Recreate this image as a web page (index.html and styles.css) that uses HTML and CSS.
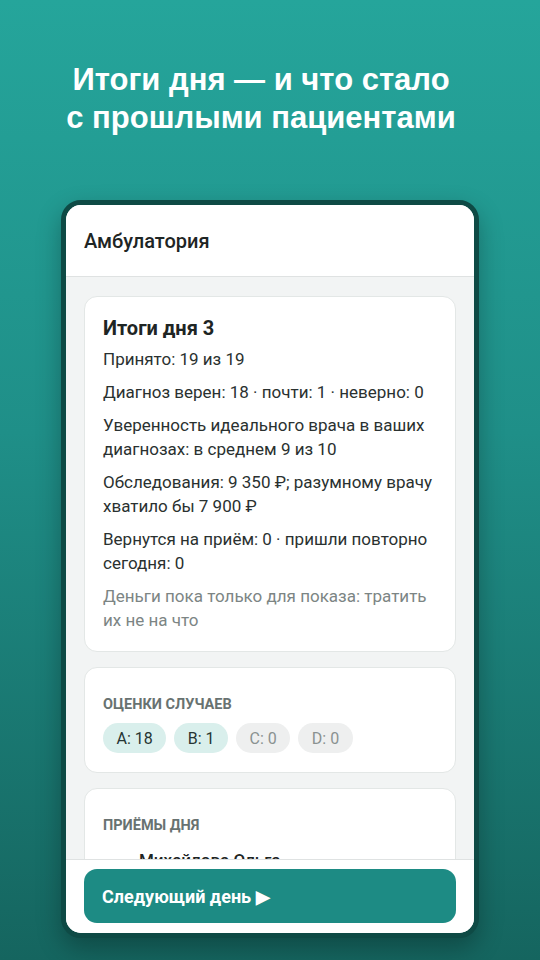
FILE: index.html
```html
<!DOCTYPE html>
<html lang="ru">
<head>
    <meta charset="UTF-8">
    <meta name="viewport" content="width=device-width, initial-scale=1.0">
    <title>Амбулатория — итоги дня</title>
    <link rel="stylesheet" href="styles.css">
</head>
<body>
    <div class="promo">
        <h1 class="promo-title">Итоги дня — и что стало<br>с прошлыми пациентами</h1>

        <div class="phone">
            <div class="screen">
                <header class="app-bar">Амбулатория</header>

                <main class="scroll">
                    <section class="card">
                        <h2 class="card-title">Итоги дня 3</h2>
                        <p class="stat">Принято: 19 из 19</p>
                        <p class="stat">Диагноз верен: 18 · почти: 1 · неверно: 0</p>
                        <p class="stat">Уверенность идеального врача в ваших диагнозах: в среднем 9 из 10</p>
                        <p class="stat">Обследования: 9 350 ₽; разумному врачу хватило бы 7 900 ₽</p>
                        <p class="stat">Вернутся на приём: 0 · пришли повторно сегодня: 0</p>
                        <p class="stat muted">Деньги пока только для показа: тратить их не на что</p>
                    </section>

                    <section class="card">
                        <h3 class="section-label">Оценки случаев</h3>
                        <div class="chips">
                            <span class="chip chip-on">A: 18</span>
                            <span class="chip chip-on">B: 1</span>
                            <span class="chip">C: 0</span>
                            <span class="chip">D: 0</span>
                        </div>
                    </section>

                    <section class="card">
                        <h3 class="section-label">Приёмы дня</h3>
                        <div class="visit">
                            <span class="visit-mark"></span>
                            <span class="visit-name">Михайлова Ольга</span>
                        </div>
                    </section>
                </main>

                <footer class="bottom-bar">
                    <button class="next-btn" type="button">Следующий день ▶</button>
                </footer>
            </div>
        </div>
    </div>
</body>
</html>
```

FILE: styles.css
```css
html, body {
    margin: 0;
    padding: 0;
    height: 100%;
}

body {
    background: linear-gradient(180deg, #25a59b 0%, #1f8f88 45%, #15655f 100%);
    font-family: Roboto, "Noto Sans", sans-serif;
    overflow: hidden;
}

.promo {
    display: flex;
    flex-direction: column;
    align-items: center;
    height: 960px;
}

.promo-title {
    margin: 61px 18px 0 0;
    color: #fff;
    font-family: "Liberation Sans", Arial, sans-serif;
    font-size: 31px;
    font-weight: bold;
    line-height: 38px;
    text-align: center;
}

/* рамка телефона */
.phone {
    margin-top: 63px;
    width: 408px;
    height: 728px;
    border: 5px solid #0e4a45;
    border-radius: 20px;
    background: #0e4a45;
    box-shadow: 0 10px 24px rgba(0, 0, 0, 0.28);
}

.screen {
    display: flex;
    flex-direction: column;
    height: 100%;
    border-radius: 15px;
    overflow: hidden;
    background: #f2f4f4;
}

.app-bar {
    flex: none;
    height: 71px;
    padding: 0 18px;
    display: flex;
    align-items: center;
    background: #fff;
    border-bottom: 1px solid #dfe2e2;
    color: #1e2524;
    font-size: 20px;
    font-weight: 500;
}

.scroll {
    flex: 1;
    overflow: hidden;
    padding: 19px 18px 0;
    display: flex;
    flex-direction: column;
    gap: 15px;
}

.card {
    flex: none;
    background: #fff;
    border: 1px solid #e3e7e6;
    border-radius: 13px;
    padding: 18px 18px 19px;
}

.card-title {
    margin: 0 0 6px;
    color: #1e2524;
    font-size: 20px;
    font-weight: bold;
    line-height: 26px;
}

.stat {
    margin: 0 0 9px;
    color: #2a3130;
    font-size: 17px;
    line-height: 24px;
}

.stat:last-child {
    margin-bottom: 0;
}

.muted {
    color: #7c8584;
}

.section-label {
    margin: 9px 0 8px;
    color: #687271;
    font-size: 14.5px;
    font-weight: bold;
    text-transform: uppercase;
    line-height: 20px;
}

.chips {
    display: flex;
    gap: 8px;
}

.chip {
    height: 30px;
    padding: 0 13.5px;
    display: flex;
    align-items: center;
    border-radius: 15px;
    background: #eeefef;
    color: #8a9291;
    font-size: 16px;
}

.chip-on {
    background: #d9efec;
    color: #263533;
}

.visit {
    display: flex;
    align-items: center;
    gap: 9px;
    margin-top: 10px;
}

.visit-mark {
    width: 27px;
    height: 28px;
}

.visit-name {
    color: #1e2524;
    font-size: 17px;
    font-weight: 500;
}

.bottom-bar {
    flex: none;
    padding: 9px 18px 10px;
    background: #fff;
    border-top: 1px solid #dfe2e2;
}

.next-btn {
    display: block;
    width: 100%;
    height: 54px;
    padding: 0 18px;
    border: none;
    border-radius: 13px;
    background: #1d8b84;
    color: #fff;
    font-family: Roboto, "Noto Sans", sans-serif;
    font-size: 18px;
    font-weight: bold;
    text-align: left;
    cursor: pointer;
}
```
